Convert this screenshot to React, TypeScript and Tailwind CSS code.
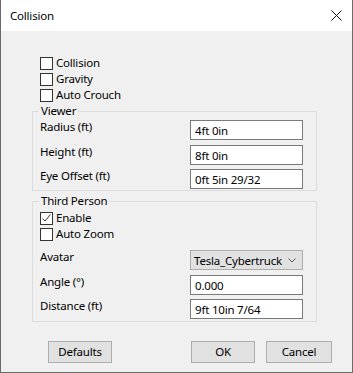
import React from "react";

const font = { fontFamily: '"Noto Sans", "Liberation Sans", sans-serif' };

function Check({ checked, label }: { checked?: boolean; label: string }) {
  return (
    <div className="flex h-[16px] items-start">
      <div className="mt-[2px] flex h-[13px] w-[13px] items-center justify-center border border-[#333333] bg-white">
        {checked && (
          <svg width="11" height="11" viewBox="0 0 11 11">
            <path d="M1.5 5.5 L4 8 L9.5 1.5" fill="none" stroke="#333" strokeWidth="1" />
          </svg>
        )}
      </div>
      <span className="ml-[3px] leading-[16px]">{label}</span>
    </div>
  );
}

function Field({ label, value, cls }: { label: string; value: string; cls: string }) {
  return (
    <div className={"flex items-start " + cls}>
      <span className="mt-[-1px] w-[150px] leading-[16px]">{label}</span>
      <div className="flex h-[20px] w-[113px] items-center border border-[#7a7a7a] bg-white pl-[4px] leading-[16px]">
        <span className="mt-[1px]">{value}</span>
      </div>
    </div>
  );
}

export default function App() {
  return (
    <div
      className="flex h-[373px] w-[353px] flex-col border-x border-b border-[#6a6a6a] bg-[#f0f0f0] text-[11.5px] tracking-[-0.2px] text-black"
      style={font}
    >
      <div className="flex h-[31px] shrink-0 items-center justify-between bg-white pl-[9px] pr-[10px]">
        <span className="mt-[1px] leading-[16px]">Collision</span>
        <svg width="11" height="11" viewBox="0 0 11 11">
          <path d="M0.5 0.5 L10.5 10.5 M10.5 0.5 L0.5 10.5" stroke="#111" strokeWidth="1" />
        </svg>
      </div>

      <div className="flex flex-col pl-[31px] pt-[24px]">
        <div className="flex flex-col pl-[8px]">
          <Check label="Collision" />
          <Check label="Gravity" />
          <Check label="Auto Crouch" />
        </div>

        <fieldset className="w-[285px] border border-[#dcdcdc] pb-[1px] pl-[7px]">
          <legend className="ml-[-1px] px-[2px] leading-[16px]">Viewer</legend>
          <Field label="Radius (ft)" value="4ft 0in" cls="mt-[1px]" />
          <Field label="Height (ft)" value="8ft 0in" cls="mt-[5px]" />
          <Field label="Eye Offset (ft)" value="0ft 5in 29/32" cls="mt-[4px]" />
        </fieldset>

        <fieldset className="mt-[2px] w-[285px] border border-[#dcdcdc] pb-[2px] pl-[7px]">
          <legend className="ml-[-1px] px-[2px] leading-[16px]">Third Person</legend>
          <div className="mt-[1px] flex flex-col">
            <Check checked label="Enable" />
            <Check label="Auto Zoom" />
          </div>
          <div className="mt-[8px] flex items-start">
            <span className="mt-[-1px] w-[150px] leading-[16px]">Avatar</span>
            <div className="flex h-[20px] w-[113px] items-center justify-between border border-[#adadad] bg-[#e1e1e1] pl-[3px] pr-[6px] leading-[16px]">
              <span className="mt-[1px]">Tesla_Cybertruck</span>
              <svg width="8" height="5" viewBox="0 0 8 5">
                <path d="M0.5 0.5 L4 4 L7.5 0.5" fill="none" stroke="#555" strokeWidth="1" />
              </svg>
            </div>
          </div>
          <Field label="Angle (°)" value="0.000" cls="mt-[5px]" />
          <Field label="Distance (ft)" value="9ft 10in 7/64" cls="mt-[4px]" />
        </fieldset>

        <div className="mt-[19px] flex items-start pl-[16px]">
          <button className="flex h-[22px] w-[64px] items-center justify-center border border-[#adadad] bg-[#e1e1e1] leading-[16px]">
            Defaults
          </button>
          <button className="ml-[79px] flex h-[22px] w-[64px] items-center justify-center border border-[#adadad] bg-[#e1e1e1] leading-[16px]">
            OK
          </button>
          <button className="ml-[11px] flex h-[22px] w-[66px] items-center justify-center border border-[#adadad] bg-[#e1e1e1] leading-[16px]">
            Cancel
          </button>
        </div>
      </div>
    </div>
  );
}
